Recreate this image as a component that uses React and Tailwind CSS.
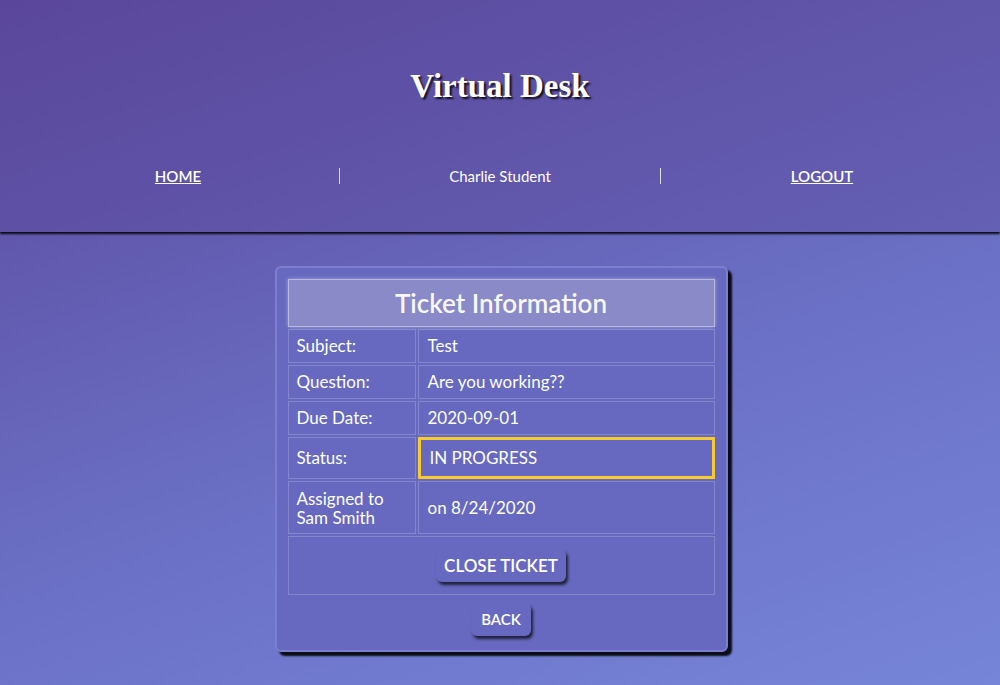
import React from 'react';

const rows = [
  { label: 'Subject:', value: 'Test' },
  { label: 'Question:', value: 'Are you working??' },
  { label: 'Due Date:', value: '2020-09-01' },
];

const Cell = ({ children, className = '' }) => (
  <td className={`border border-white/20 px-2 ${className}`}>{children}</td>
);

export default function App() {
  return (
    <div
      className="min-h-[685px] w-full bg-[linear-gradient(160deg,#5a479b_0%,#6a6fc4_55%,#7685d8_100%)] text-white"
      style={{ fontFamily: "Lato, 'Open Sans', sans-serif" }}
    >
      {/* Header */}
      <header className="h-[232px] bg-[linear-gradient(160deg,#5a479b_0%,#6460b4_100%)] shadow-[0_2px_2px_rgba(0,0,0,0.9)] flex flex-col items-center">
        <h1
          className="mt-[66px] text-[33px] font-bold leading-10 [text-shadow:2px_2px_2px_rgba(0,0,0,0.85)]"
          style={{ fontFamily: "'Liberation Serif', 'DejaVu Serif', serif" }}
        >
          Virtual Desk
        </h1>
        <nav className="mt-[62px] w-[966px] grid grid-cols-3 text-[15px]">
          <div className="flex justify-center items-center h-4">
            <a href="#" className="underline font-semibold leading-none">HOME</a>
          </div>
          <div className="flex justify-center items-center h-4 border-l border-r border-white/80">
            <span className="leading-none">Charlie Student</span>
          </div>
          <div className="flex justify-center items-center h-4">
            <a href="#" className="underline font-semibold leading-none">LOGOUT</a>
          </div>
        </nav>
      </header>

      {/* Card */}
      <main className="flex justify-center pt-[34px] pb-8 pl-[2px]">
        <div className="w-[453px] rounded-md border-2 border-[#7c7fd0] bg-[#6669bf] shadow-[4px_4px_2px_rgba(0,0,0,0.9)] px-[9px] pt-[9px] pb-[14px] flex flex-col items-center">
          <table className="w-full border-separate border-spacing-[2px] text-[17px]">
            <tbody>
              <tr>
                <td
                  colSpan={2}
                  className="h-[48px] bg-[#8b8ac8] border border-white/40 text-center text-[26px] font-semibold text-white/95 shadow-[0_0_4px_rgba(255,255,255,0.4)]"
                >
                  Ticket Information
                </td>
              </tr>
              {rows.map((r) => (
                <tr key={r.label} className="h-[34px]">
                  <Cell className="w-[128px]">{r.label}</Cell>
                  <Cell className="px-[9px]">{r.value}</Cell>
                </tr>
              ))}
              <tr className="h-[42px]">
                <Cell>Status:</Cell>
                <td className="border-[3px] border-[#f7cb2d] px-[9px]">IN PROGRESS</td>
              </tr>
              <tr className="h-[53px]">
                <Cell className="leading-[19px]">
                  Assigned to
                  <br />
                  Sam Smith
                </Cell>
                <Cell className="px-[9px]">on 8/24/2020</Cell>
              </tr>
              <tr className="h-[59px]">
                <td colSpan={2} className="border border-white/20 text-center">
                  <button className="h-[33px] px-2 rounded-md bg-[#6669bf] shadow-[2px_3px_3px_rgba(0,0,0,0.7)] text-[17px] font-semibold">
                    CLOSE TICKET
                  </button>
                </td>
              </tr>
            </tbody>
          </table>
          <button className="mt-[6px] h-[33px] px-[10px] rounded-md bg-[#6669bf] shadow-[2px_3px_3px_rgba(0,0,0,0.7)] text-[15px] font-semibold">
            BACK
          </button>
        </div>
      </main>
    </div>
  );
}
